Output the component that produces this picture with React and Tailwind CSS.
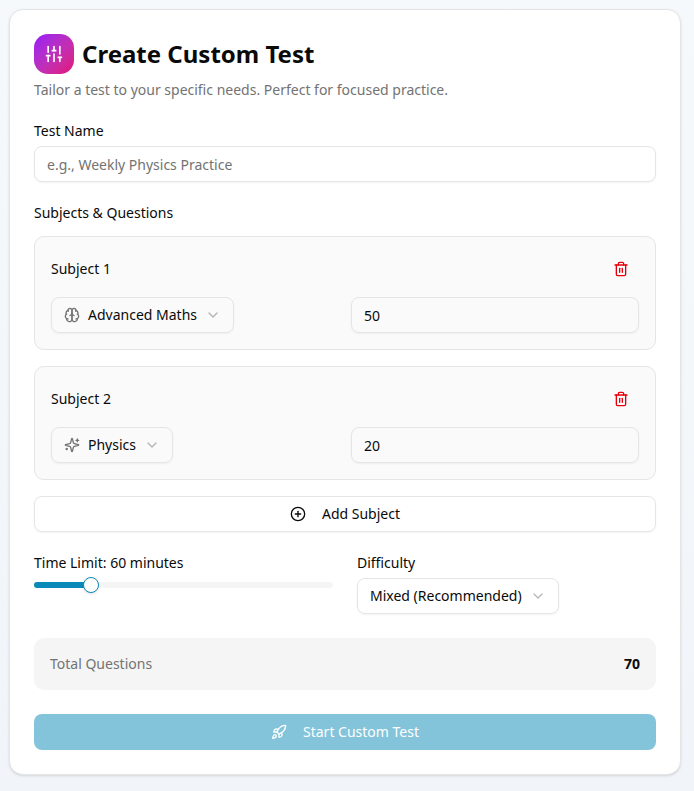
import React, { useState } from 'react';
import { SlidersVertical, ChevronDown, CirclePlus } from 'lucide-react';

const Icon = ({ className, children }) => (
  <svg
    viewBox="0 0 24 24"
    fill="none"
    stroke="currentColor"
    strokeWidth="2"
    strokeLinecap="round"
    strokeLinejoin="round"
    className={className}
  >
    {children}
  </svg>
);

const BrainIcon = ({ className }) => (
  <Icon className={className}>
    <path d="M12 5a3 3 0 1 0-5.997.125 4 4 0 0 0-2.526 5.77 4 4 0 0 0 .556 6.588A4 4 0 1 0 12 18Z" />
    <path d="M12 5a3 3 0 1 1 5.997.125 4 4 0 0 1 2.526 5.77 4 4 0 0 1-.556 6.588A4 4 0 1 1 12 18Z" />
    <path d="M15 13a4.5 4.5 0 0 1-3-4 4.5 4.5 0 0 1-3 4" />
    <path d="M17.599 6.5a3 3 0 0 0 .399-1.375" />
    <path d="M6.003 5.125A3 3 0 0 0 6.401 6.5" />
    <path d="M3.477 10.896a4 4 0 0 1 .585-.396" />
    <path d="M19.938 10.5a4 4 0 0 1 .585.396" />
    <path d="M6 18a4 4 0 0 1-1.967-.516" />
    <path d="M19.967 17.484A4 4 0 0 1 18 18" />
  </Icon>
);

const SparklesIcon = ({ className }) => (
  <Icon className={className}>
    <path d="M9.937 15.5A2 2 0 0 0 8.5 14.063l-6.135-1.582a.5.5 0 0 1 0-.962L8.5 9.936A2 2 0 0 0 9.937 8.5l1.582-6.135a.5.5 0 0 1 .963 0L14.063 8.5A2 2 0 0 0 15.5 9.937l6.135 1.581a.5.5 0 0 1 0 .964L15.5 14.063a2 2 0 0 0-1.437 1.437l-1.582 6.135a.5.5 0 0 1-.963 0z" />
    <path d="M20 3v4" />
    <path d="M22 5h-4" />
    <path d="M4 17v2" />
    <path d="M5 18H3" />
  </Icon>
);

const TrashIcon = ({ className }) => (
  <Icon className={className}>
    <path d="M3 6h18" />
    <path d="M19 6v14c0 1-1 2-2 2H7c-1 0-2-1-2-2V6" />
    <path d="M8 6V4c0-1 1-2 2-2h4c1 0 2 1 2 2v2" />
    <path d="M10 11v6" />
    <path d="M14 11v6" />
  </Icon>
);

const RocketIcon = ({ className }) => (
  <Icon className={className}>
    <path d="M4.5 16.5c-1.5 1.26-2 5-2 5s3.74-.5 5-2c.71-.84.7-2.13-.09-2.91a2.18 2.18 0 0 0-2.91-.09z" />
    <path d="m12 15-3-3a22 22 0 0 1 2-3.95A12.88 12.88 0 0 1 22 2c0 2.72-.78 7.5-6 11a22.35 22.35 0 0 1-4 2z" />
    <path d="M9 12H4s.55-3.03 2-4c1.62-1.08 5 0 5 0" />
    <path d="M12 15v5s3.03-.55 4-2c1.08-1.62 0-5 0-5" />
  </Icon>
);

const initialSubjects = [
  { name: 'Advanced Maths', icon: BrainIcon, questions: 50 },
  { name: 'Physics', icon: SparklesIcon, questions: 20 }
];

const MIN_MINUTES = 10;
const MAX_MINUTES = 300;

const SelectTrigger = ({ icon: SubjectIcon, children }) => (
  <button className="flex h-9 w-fit items-center gap-2 rounded-[8px] border border-[#e5e5e5] px-3 text-sm whitespace-nowrap shadow-xs">
    {SubjectIcon && <SubjectIcon className="size-4 text-[#737373]" />}
    <span>{children}</span>
    <ChevronDown className="size-4 text-[#737373] opacity-50" />
  </button>
);

const SubjectCard = ({ index, subject, onChange, onRemove }) => (
  <div className="space-y-3 rounded-[10px] border border-[#e5e5e5] bg-[#fafafa] p-4">
    <div className="flex items-center justify-between">
      <span className="text-sm leading-none">Subject {index + 1}</span>
      <button onClick={onRemove} className="flex h-8 items-center px-2.5 text-[#e7000b]">
        <TrashIcon className="size-4" />
      </button>
    </div>
    <div className="grid grid-cols-2 gap-3">
      <SelectTrigger icon={subject.icon}>{subject.name}</SelectTrigger>
      <input
        value={subject.questions}
        onChange={(e) => onChange(Number(e.target.value) || 0)}
        className="h-9 w-full rounded-[8px] border border-[#e5e5e5] bg-transparent px-3 py-1 text-sm shadow-xs outline-none"
      />
    </div>
  </div>
);

const TimeSlider = ({ value }) => {
  const ratio = (value - MIN_MINUTES) / (MAX_MINUTES - MIN_MINUTES);

  return (
    <div className="relative h-1.5 w-full rounded-full bg-[#f5f5f5]">
      <div className="h-full rounded-l-full bg-[#0a8ab8]" style={{ width: `${ratio * 100}%` }} />
      {/* Thumb stays inside the track at both ends */}
      <span
        className="absolute -top-[5px] size-4 rounded-full border border-[#0a8ab8] bg-white shadow-sm"
        style={{ left: `calc((100% - 16px) * ${ratio})` }}
      />
    </div>
  );
};

const App = () => {
  const [testName, setTestName] = useState('');
  const [subjects, setSubjects] = useState(initialSubjects);
  const minutes = 60;

  const total = subjects.reduce((sum, s) => sum + s.questions, 0);

  const updateQuestions = (index, questions) => {
    setSubjects(subjects.map((s, i) => (i === index ? { ...s, questions } : s)));
  };

  const removeSubject = (index) => {
    setSubjects(subjects.filter((_, i) => i !== index));
  };

  const addSubject = () => {
    setSubjects([...subjects, { name: 'Physics', icon: SparklesIcon, questions: 10 }]);
  };

  return (
    <div className="min-h-screen bg-gradient-to-b from-[#f5f9fc] to-[#f1f5f9] pt-[9px] pl-[9px] font-['Noto_Sans',sans-serif] text-[#0a0a0a]">
      <div className="w-2xl space-y-6 rounded-[14px] border border-[#e5e5e5] bg-white p-6 shadow-sm">

        {/* Header */}
        <div className="space-y-1.5">
          <h1 className="flex items-center gap-2 text-2xl font-bold">
            <span className="flex size-10 items-center justify-center rounded-[14px] bg-gradient-to-br from-[#9810fa] to-[#e60076] text-white">
              <SlidersVertical className="size-5" />
            </span>
            Create Custom Test
          </h1>
          <p className="text-sm text-[#737373]">Tailor a test to your specific needs. Perfect for focused practice.</p>
        </div>

        {/* Test Name */}
        <div className="space-y-2">
          <label className="block text-sm leading-none">Test Name</label>
          <input
            value={testName}
            onChange={(e) => setTestName(e.target.value)}
            placeholder="e.g., Weekly Physics Practice"
            className="block h-9 w-full rounded-[8px] border border-[#e5e5e5] px-3 py-1 text-sm shadow-xs outline-none placeholder:text-[#737373]"
          />
        </div>

        {/* Subjects */}
        <div className="space-y-4">
          <label className="block text-sm leading-none">Subjects &amp; Questions</label>
          {subjects.map((subject, index) => (
            <SubjectCard
              key={index}
              index={index}
              subject={subject}
              onChange={(questions) => updateQuestions(index, questions)}
              onRemove={() => removeSubject(index)}
            />
          ))}
          <button
            onClick={addSubject}
            className="flex h-9 w-full items-center justify-center gap-4 rounded-[8px] border border-[#e5e5e5] text-sm shadow-xs"
          >
            <CirclePlus className="size-4" />
            Add Subject
          </button>
        </div>

        {/* Time limit and difficulty */}
        <div className="grid grid-cols-2 gap-6">
          <div className="space-y-3">
            <label className="block text-sm leading-none">Time Limit: {minutes} minutes</label>
            <TimeSlider value={minutes} />
          </div>
          <div className="space-y-2">
            <label className="block text-sm leading-none">Difficulty</label>
            <SelectTrigger>Mixed (Recommended)</SelectTrigger>
          </div>
        </div>

        {/* Total */}
        <div className="flex items-center justify-between rounded-[10px] bg-[#f5f5f5] p-4 text-sm">
          <span className="text-[#737373]">Total Questions</span>
          <span className="font-bold">{total}</span>
        </div>

        <button
          disabled
          className="flex h-9 w-full items-center justify-center gap-4 rounded-[8px] bg-[#0a8ab8] text-sm text-white opacity-50"
        >
          <RocketIcon className="size-4" />
          Start Custom Test
        </button>
      </div>
    </div>
  );
};

export default App;
